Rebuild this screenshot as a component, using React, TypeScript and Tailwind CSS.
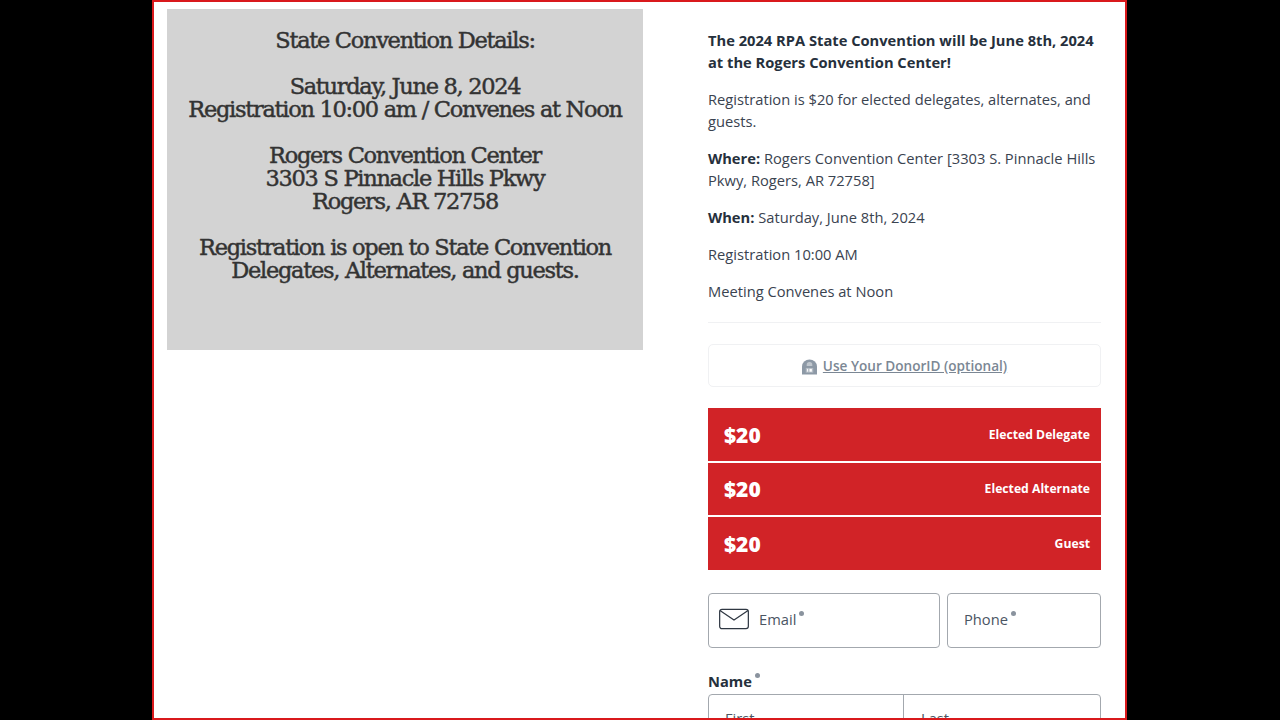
const sans = "font-['Open_Sans','Noto_Sans',sans-serif]";

const prices = [
  { amount: "$20", label: "Elected Delegate" },
  { amount: "$20", label: "Elected Alternate" },
  { amount: "$20", label: "Guest" },
];

function DonorIcon() {
  return (
    <svg viewBox="0 0 16 16" className="w-[15px] h-[16px] mr-[6px] mt-[2px]">
      <path d="M0 16V7.5a8 7.5 0 0 1 16 0V16z" fill="#8d99a6" />
      <path d="M5 7V5.5a3 2.8 0 0 1 6 0V7z" fill="#fff" opacity="0.45" />
      <rect x="4" y="9" width="8" height="5" fill="#fff" opacity="0.35" />
      <rect x="5.5" y="10" width="1" height="3" fill="#fff" />
      <rect x="8" y="10" width="2.5" height="3" fill="#fff" />
    </svg>
  );
}

function MailIcon() {
  return (
    <svg viewBox="0 0 32 22" className="w-[30px] h-[22px] shrink-0" fill="none" stroke="#2f3742" strokeWidth="1.3">
      <rect x="0.7" y="0.7" width="30.6" height="20.6" rx="2.5" />
      <path d="M1 2l15 10L31 2" />
    </svg>
  );
}

function Req() {
  return <span className="inline-block w-[5px] h-[5px] rounded-full bg-[#8a939e] ml-[3px] align-[9px]" />;
}

export default function App() {
  return (
    <div className={`h-screen overflow-hidden bg-black pl-[152px] ${sans}`}>
      <div className="w-[975px] h-[720px] bg-white border-2 border-[#d9191c] overflow-hidden flex">
        <div className="w-[491px] shrink-0 pl-[13px] pt-[7px]">
          <div className="w-[476px] h-[341px] bg-[#d3d3d3] pt-[20px] text-center text-[#333] font-['DejaVu_Serif',serif] text-[22.5px] leading-[23px] tracking-[-1.3px] [-webkit-text-stroke:0.45px_#333]">
            <p>State Convention Details:</p>
            <br />
            <p>Saturday, June 8, 2024</p>
            <p>Registration 10:00 am / Convenes at Noon</p>
            <br />
            <p>Rogers Convention Center</p>
            <p>3303 S Pinnacle Hills Pkwy</p>
            <p>Rogers, AR 72758</p>
            <br />
            <p>Registration is open to State Convention</p>
            <p>Delegates, Alternates, and guests.</p>
          </div>
        </div>

        <div className="ml-[63px] w-[393px] pt-[27px] text-[14.7px] leading-[22px] text-[#3a4350]">
          <p className="font-bold text-[#26303c]">
            The 2024 RPA State Convention will be June 8th, 2024 at the Rogers Convention Center!
          </p>
          <p className="mt-[15px]">Registration is $20 for elected delegates, alternates, and guests.</p>
          <p className="mt-[15px]">
            <b className="text-[#26303c]">Where:</b> Rogers Convention Center [3303 S. Pinnacle Hills Pkwy, Rogers, AR 72758]
          </p>
          <p className="mt-[15px]">
            <b className="text-[#26303c]">When:</b> Saturday, June 8th, 2024
          </p>
          <p className="mt-[15px]">Registration 10:00 AM</p>
          <p className="mt-[15px]">Meeting Convenes at Noon</p>

          <div className="mt-[20px] border-t border-[#f0f1f3]" />

          <div className="mt-[21px] h-[43px] rounded-[5px] border border-[#f0f1f3] flex items-center justify-center text-[13.6px] font-semibold text-[#7b8794]">
            <DonorIcon />
            <span className="underline">Use Your DonorID (optional)</span>
          </div>

          <div className="mt-[21px] flex flex-col gap-[2px]">
            {prices.map((p) => (
              <div key={p.label} className="h-[52.5px] bg-[#d12327] pl-[16px] pr-[11px] flex items-center justify-between text-white">
                <span className="text-[21px] font-extrabold pt-[1px]">{p.amount}</span>
                <span className="text-[12.2px] font-bold pt-[1px]">{p.label}</span>
              </div>
            ))}
          </div>

          <div className="mt-[23px] flex gap-[7px]">
            <div className="w-[232px] h-[55px] rounded-[4px] border border-[#a3a8ae] pl-[10px] pb-[3px] flex items-center gap-[10px]">
              <MailIcon />
              <span className="text-[#4b5563]">Email<Req /></span>
            </div>
            <div className="flex-1 h-[55px] rounded-[4px] border border-[#a3a8ae] pl-[16px] pb-[3px] flex items-center">
              <span className="text-[#4b5563]">Phone<Req /></span>
            </div>
          </div>

          <p className="mt-[22px] font-bold text-[#26303c]">Name<Req /></p>
          <div className="mt-[2px] flex h-[55px] rounded-[4px] border border-[#a3a8ae] text-[#4b5563]">
            <div className="w-[195px] border-r border-[#a3a8ae] pl-[16px] pt-[12px]">First</div>
            <div className="flex-1 pl-[17px] pt-[12px]">Last</div>
          </div>
        </div>
      </div>
    </div>
  );
}
